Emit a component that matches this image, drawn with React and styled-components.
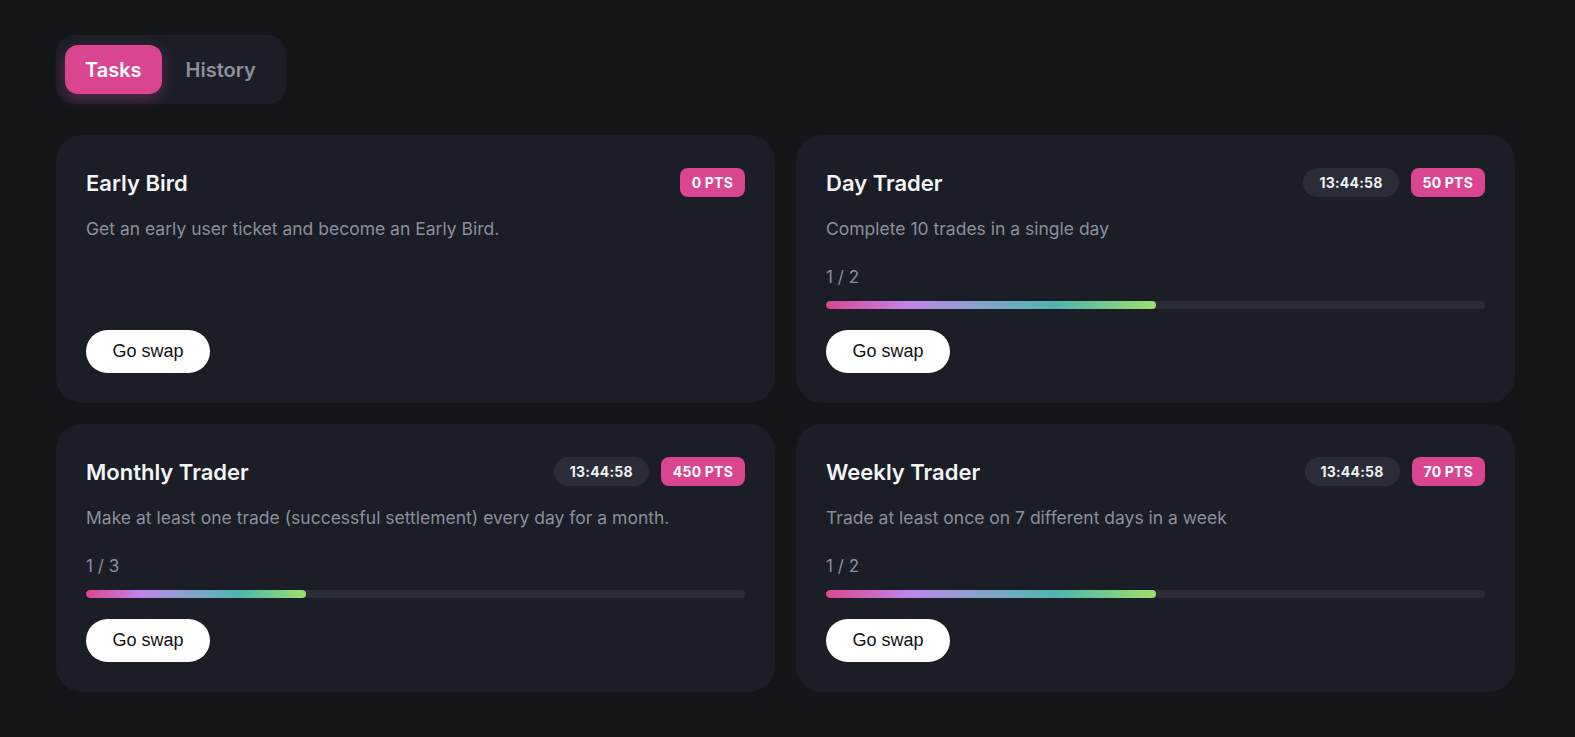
import React from 'react'
import styled, { createGlobalStyle } from 'styled-components'

const GlobalStyle = createGlobalStyle`
  html, body {
    margin: 0;
    background: #15161a;
  }
  body {
    font-family: Inter, "Noto Sans", sans-serif;
    color: #f1f2f5;
  }
`

const Page = styled.div`
  padding: 35px 60px 45px 56px;
`

const TabBar = styled.div`
  display: inline-flex;
  align-items: center;
  gap: 4px;
  padding: 10px 10px 10px 9px;
  background: #1b1e27;
  border-radius: 18px;
  margin-bottom: 31px;
`

const Tab = styled.button`
  border: 0;
  cursor: pointer;
  font-family: Inter, sans-serif;
  font-size: 20px;
  font-weight: 600;
  height: 49px;
  padding: 0 20px;
  border-radius: 13px;
  background: ${p => (p.$active ? '#d9468f' : 'transparent')};
  color: ${p => (p.$active ? '#ffffff' : '#8b909c')};
  box-shadow: ${p => (p.$active ? '0 4px 14px rgba(217, 70, 143, 0.35)' : 'none')};
`

const Grid = styled.div`
  display: grid;
  grid-template-columns: 1fr 1fr;
  gap: 21px;
`

const Card = styled.div`
  background: #1b1e27;
  border-radius: 26px;
  height: 268px;
  box-sizing: border-box;
  padding: 33px 30px 30px;
  display: flex;
  flex-direction: column;
`

const Header = styled.div`
  display: flex;
  align-items: center;
  justify-content: space-between;
  height: 29px;
`

const Title = styled.h3`
  margin: 0;
  font-size: 22px;
  font-weight: 600;
  color: #f3f4f6;
`

const Badges = styled.div`
  display: flex;
  gap: 12px;
`

const Badge = styled.span`
  display: inline-flex;
  align-items: center;
  height: 29px;
  padding: 0 ${p => (p.$timer ? '16px' : '12px')};
  border-radius: ${p => (p.$timer ? '15px' : '8px')};
  background: ${p => (p.$timer ? '#2a2d37' : '#d9468f')};
  color: ${p => (p.$timer ? '#eef0f3' : '#ffffff')};
  font-size: 14px;
  font-weight: 700;
  letter-spacing: 0.2px;
`

const Desc = styled.p`
  margin: 20px 0 0;
  font-size: 17.5px;
  line-height: 24px;
  color: #8b8f9b;
`

const Progress = styled.div`
  margin-top: 24px;
`

const Count = styled.div`
  font-size: 17px;
  line-height: 24px;
  color: #8b8f9b;
`

const Track = styled.div`
  margin-top: 12px;
  height: 8px;
  border-radius: 4px;
  background: #2a2d37;
  overflow: hidden;
`

const Fill = styled.div`
  height: 100%;
  border-radius: 4px;
  background: linear-gradient(90deg, #db4690 0%, #c184ea 25%, #8aa2d0 45%, #4fb5ad 70%, #9ce06c 100%);
`

const Spacer = styled.div`
  flex: 1;
`

const SwapButton = styled.button`
  align-self: flex-start;
  margin-top: auto;
  height: 43px;
  width: 124px;
  border: 0;
  border-radius: 22px;
  background: #ffffff;
  color: #111111;
  font-family: "Liberation Sans", Arial, sans-serif;
  font-size: 18px;
  cursor: pointer;
`

const tasks = [
  { title: 'Early Bird', pts: 0, desc: 'Get an early user ticket and become an Early Bird.' },
  { title: 'Day Trader', pts: 50, timer: '13:44:58', desc: 'Complete 10 trades in a single day', done: 1, total: 2 },
  { title: 'Monthly Trader', pts: 450, timer: '13:44:58', desc: 'Make at least one trade (successful settlement) every day for a month.', done: 1, total: 3 },
  { title: 'Weekly Trader', pts: 70, timer: '13:44:58', desc: 'Trade at least once on 7 different days in a week', done: 1, total: 2 },
]

const TaskCard = ({ task }) => (
  <Card>
    <Header>
      <Title>{task.title}</Title>
      <Badges>
        {task.timer && <Badge $timer>{task.timer}</Badge>}
        <Badge>{task.pts} PTS</Badge>
      </Badges>
    </Header>
    <Desc>{task.desc}</Desc>
    {task.total ? (
      <Progress>
        <Count>{task.done} / {task.total}</Count>
        <Track>
          <Fill style={{ width: `${(task.done / task.total) * 100}%` }} />
        </Track>
      </Progress>
    ) : (
      <Spacer />
    )}
    <SwapButton>Go swap</SwapButton>
  </Card>
)

const App = () => (
  <Page>
    <GlobalStyle />
    <TabBar>
      <Tab $active>Tasks</Tab>
      <Tab>History</Tab>
    </TabBar>
    <Grid>
      {tasks.map(t => (
        <TaskCard key={t.title} task={t} />
      ))}
    </Grid>
  </Page>
)

export default App
